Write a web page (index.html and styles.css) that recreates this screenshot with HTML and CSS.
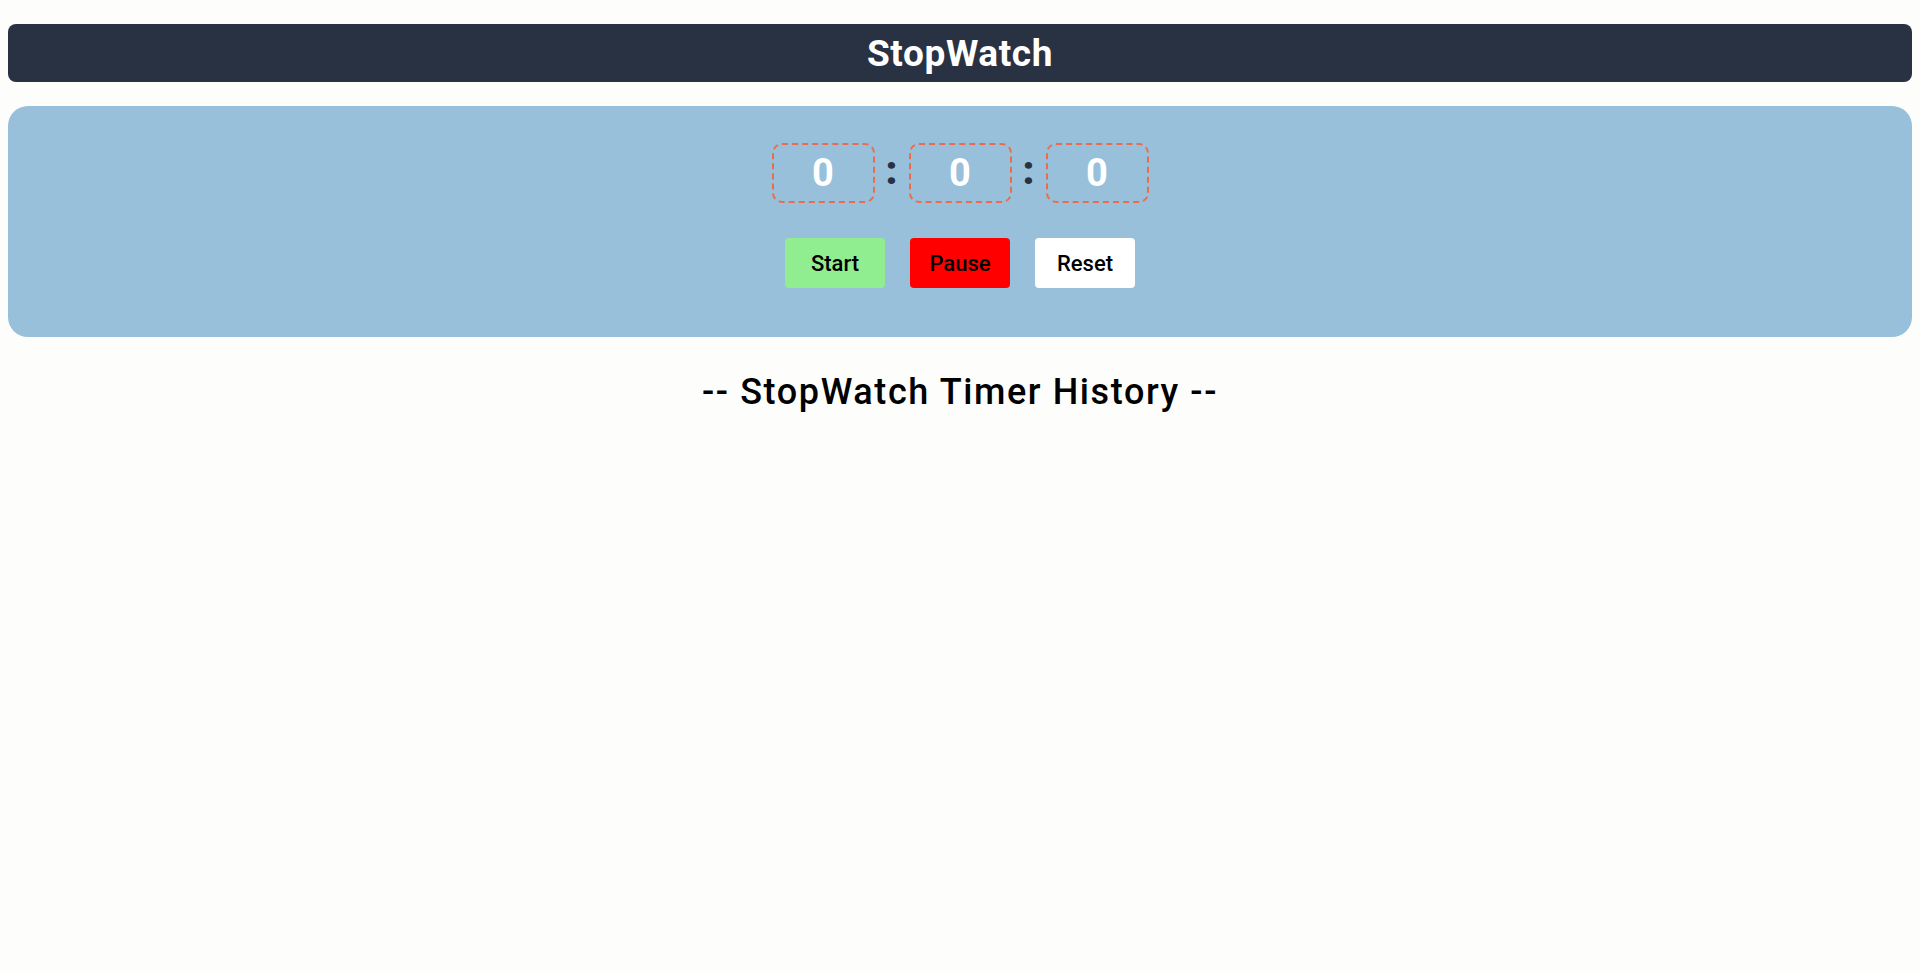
FILE: index.html
```html
<!DOCTYPE html>
<html lang="en">
<head>
<meta charset="utf-8">
<title>StopWatch</title>
<link rel="stylesheet" href="styles.css">
</head>
<body>
  <header class="topbar">
    <h1 class="title">StopWatch</h1>
  </header>
  <section class="panel">
    <div class="timer">
      <div class="digit">0</div>
      <span class="colon">:</span>
      <div class="digit">0</div>
      <span class="colon">:</span>
      <div class="digit">0</div>
    </div>
    <div class="controls">
      <button class="btn btn-start">Start</button>
      <button class="btn btn-pause">Pause</button>
      <button class="btn btn-reset">Reset</button>
    </div>
  </section>
  <h2 class="history">-- StopWatch Timer History --</h2>
</body>
</html>
```

FILE: styles.css
```css
html, body {
  background: #fdfdfb;
}
body {
  margin: 0;
  padding: 24px 8px 0;
  font-family: Roboto, "Liberation Sans", sans-serif;
  color: #000;
}
.topbar {
  height: 58px;
  background: #293243;
  border-radius: 8px;
  display: flex;
  align-items: center;
  justify-content: center;
}
.title {
  margin: 0;
  color: #ffffff;
  font-size: 37px;
  font-weight: 700;
  letter-spacing: 0.6px;
  line-height: 1;
}
.panel {
  margin-top: 24px;
  height: 231px;
  box-sizing: border-box;
  padding-top: 37px;
  background: #98c0da;
  border-radius: 20px;
  display: flex;
  flex-direction: column;
  align-items: center;
}
.timer {
  display: flex;
  align-items: center;
}
.digit {
  width: 103px;
  height: 60px;
  box-sizing: border-box;
  border: 2px dashed #ec6b4c;
  border-radius: 10px;
  display: flex;
  align-items: center;
  justify-content: center;
  color: #ffffff;
  font-size: 38px;
  font-weight: 700;
}
.colon {
  width: 34px;
  text-align: center;
  color: #293243;
  font-size: 40px;
  font-weight: 900;
  line-height: 1;
  padding-bottom: 4px;
}
.controls {
  margin-top: 35px;
  display: flex;
  gap: 25px;
}
.btn {
  width: 100px;
  height: 50px;
  border: none;
  border-radius: 4px;
  font-family: Roboto, "Liberation Sans", sans-serif;
  font-size: 22px;
  font-weight: 500;
  color: #000;
  padding: 0;
}
.btn-start { background: #90ee90; }
.btn-pause { background: #ff0000; }
.btn-reset { background: #ffffff; }
.history {
  margin: 35px 0 0;
  text-align: center;
  font-size: 36px;
  font-weight: 500;
  letter-spacing: 1.6px;
  line-height: 40px;
}
```
